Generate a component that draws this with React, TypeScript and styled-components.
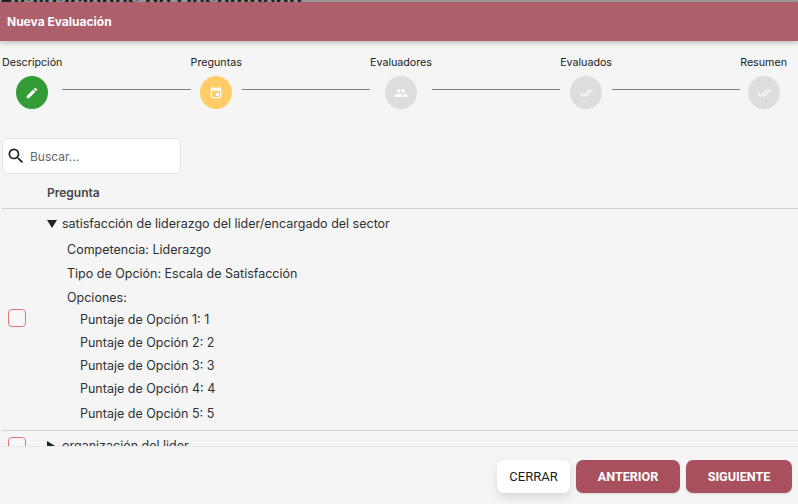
import React from "react";
import styled, { createGlobalStyle } from "styled-components";
import { MdEdit, MdEvent, MdPeople, MdDoneAll, MdSearch } from "react-icons/md";

const GlobalStyle = createGlobalStyle`
  html, body {
    margin: 0;
    padding: 0;
    height: 100%;
    overflow: hidden;
    background: #f5f5f5;
  }
  * {
    box-sizing: border-box;
  }
`;

const Page = styled.div`
  width: 798px;
  height: 504px;
  display: flex;
  flex-direction: column;
  background: #f5f5f5;
  font-family: Inter, "Liberation Sans", sans-serif;
  color: #2f3133;
  overflow: hidden;
`;

const Backdrop = styled.div`
  height: 2px;
  flex: none;
  background: #999;
  overflow: hidden;
  font-family: Inter, sans-serif;
  font-size: 21.5px;
  font-weight: 700;
  line-height: 2px;
  color: #222;
  white-space: nowrap;
`;

const Header = styled.div`
  height: 39px;
  flex: none;
  display: flex;
  align-items: center;
  padding: 0 7px;
  background: #ae5f6c;
  color: #fff;
  font-size: 12px;
  font-weight: 700;
  box-shadow: 0 2px 5px rgba(0, 0, 0, 0.22);
`;

const Stepper = styled.div`
  flex: none;
  display: flex;
  align-items: flex-start;
  padding: 15px 11px 0 2px;
  height: 97px;
`;

const Step = styled.div`
  flex: none;
  display: flex;
  flex-direction: column;
  align-items: center;
  gap: 6px;
`;

const StepLabel = styled.div`
  font-size: 10.7px;
  line-height: 14px;
  color: #222;
`;

const StepCircle = styled.div<{ $color: string }>`
  width: 32px;
  height: 33px;
  border-radius: 50%;
  display: flex;
  align-items: center;
  justify-content: center;
  color: #fff;
  background: ${(props) => props.$color};
`;

const Connector = styled.div`
  flex: 1;
  height: 1px;
  margin-top: 33px;
  background: #7f7f7f;
`;

const SearchBox = styled.div`
  flex: none;
  width: 179px;
  height: 36px;
  margin-left: 2px;
  padding-left: 3px;
  display: flex;
  align-items: center;
  gap: 4px;
  background: #fff;
  border: 1px solid #e2e2e2;
  border-radius: 6px;
  color: #222;
`;

const SearchText = styled.span`
  font-size: 12px;
  color: #666;
`;

const TableArea = styled.div`
  flex: 1;
  min-height: 0;
  overflow: hidden;
  margin-left: 2px;
`;

const HeadRow = styled.div`
  height: 35px;
  padding: 2px 0 0 45px;
  display: flex;
  align-items: center;
  font-size: 12px;
  font-weight: 600;
  color: #44474a;
  border-bottom: 1px solid #cfcfcf;
`;

const QuestionRow = styled.div`
  display: flex;
  align-items: center;
  border-bottom: 1px solid #cfcfcf;
`;

const CheckCell = styled.div`
  flex: none;
  width: 45px;
  padding-left: 6px;
`;

const Check = styled.div`
  width: 18px;
  height: 18px;
  margin-bottom: 3px;
  border: 1px solid #e57373;
  border-radius: 4px;
  background: #f8f8f8;
`;

const Question = styled.div<{ $collapsed?: boolean }>`
  flex: 1;
  padding: 7px 0 ${(props) => (props.$collapsed ? "10px" : "5px")};
  font-size: 12.5px;
`;

const Summary = styled.div`
  display: flex;
  align-items: center;
  gap: 5px;
  line-height: 16px;
`;

const Details = styled.div`
  display: flex;
  flex-direction: column;
  padding: 6px 0 0 20px;
`;

const Line = styled.div`
  height: 23.8px;
  line-height: 23.8px;
  white-space: nowrap;
`;

const OptionsTitle = styled(Line)`
  height: 22px;
  line-height: 23px;
`;

const OptionLine = styled(Line)`
  height: 23px;
  line-height: 23px;
  padding-left: 13px;

  &:last-child {
    margin-top: 2px;
  }
`;

const Footer = styled.div`
  flex: none;
  height: 58px;
  display: flex;
  justify-content: flex-end;
  align-items: flex-start;
  gap: 6px;
  padding: 13px 6px 0 0;
  border-top: 1px solid #e6e8ec;
  background: #f5f5f5;
`;

const Button = styled.button<{ $primary?: boolean; $width: number }>`
  height: 33px;
  width: ${(props) => props.$width}px;
  padding: 0;
  border: none;
  border-radius: 7px;
  font-family: Roboto, "Liberation Sans", sans-serif;
  font-size: ${(props) => (props.$primary ? "12.6px" : "13px")};
  font-weight: ${(props) => (props.$primary ? 700 : 400)};
  color: ${(props) => (props.$primary ? "#fff" : "#1a1a1a")};
  background: ${(props) => (props.$primary ? "#a8505e" : "#fff")};
  box-shadow: ${(props) =>
    props.$primary
      ? "0 1px 2px rgba(0, 0, 0, 0.12)"
      : "0 4px 10px rgba(0, 0, 0, 0.12)"};
`;

const Arrow = ({ open }: { open: boolean }) => (
  <svg width="10" height="10" viewBox="0 0 10 10" fill="#222">
    {open ? <path d="M0 1h10L5 9z" /> : <path d="M0 0l8 5-8 5z" />}
  </svg>
);

const steps = [
  { label: "Descripción", color: "#339c37", icon: <MdEdit size={14} /> },
  { label: "Preguntas", color: "#ffcc66", icon: <MdEvent size={14} /> },
  { label: "Evaluadores", color: "#dddddd", icon: <MdPeople size={14} /> },
  { label: "Evaluados", color: "#dddddd", icon: <MdDoneAll size={14} /> },
  { label: "Resumen", color: "#dddddd", icon: <MdDoneAll size={14} /> },
];

const options = [1, 2, 3, 4, 5];

const App = () => {
  return (
    <Page>
      <GlobalStyle />
      <Backdrop>Evaluaciones de Desempeño</Backdrop>
      <Header>Nueva Evaluación</Header>
      <Stepper>
        {steps.map((step, i) => (
          <React.Fragment key={step.label}>
            {i > 0 && <Connector />}
            <Step>
              <StepLabel>{step.label}</StepLabel>
              <StepCircle $color={step.color}>{step.icon}</StepCircle>
            </Step>
          </React.Fragment>
        ))}
      </Stepper>
      <SearchBox>
        <MdSearch size={20} />
        <SearchText>Buscar...</SearchText>
      </SearchBox>
      <TableArea>
        <HeadRow>Pregunta</HeadRow>
        <QuestionRow>
          <CheckCell>
            <Check />
          </CheckCell>
          <Question>
            <Summary>
              <Arrow open />
              satisfacción de liderazgo del lider/encargado del sector
            </Summary>
            <Details>
              <Line>Competencia: Liderazgo</Line>
              <Line>Tipo de Opción: Escala de Satisfacción</Line>
              <OptionsTitle>Opciones:</OptionsTitle>
              {options.map((n) => (
                <OptionLine key={n}>
                  Puntaje de Opción {n}: {n}
                </OptionLine>
              ))}
            </Details>
          </Question>
        </QuestionRow>
        <QuestionRow>
          <CheckCell>
            <Check />
          </CheckCell>
          <Question $collapsed>
            <Summary>
              <Arrow open={false} />
              organización del lider
            </Summary>
          </Question>
        </QuestionRow>
      </TableArea>
      <Footer>
        <Button $width={73}>CERRAR</Button>
        <Button $primary $width={104}>
          ANTERIOR
        </Button>
        <Button $primary $width={106}>
          SIGUIENTE
        </Button>
      </Footer>
    </Page>
  );
};

export default App;
